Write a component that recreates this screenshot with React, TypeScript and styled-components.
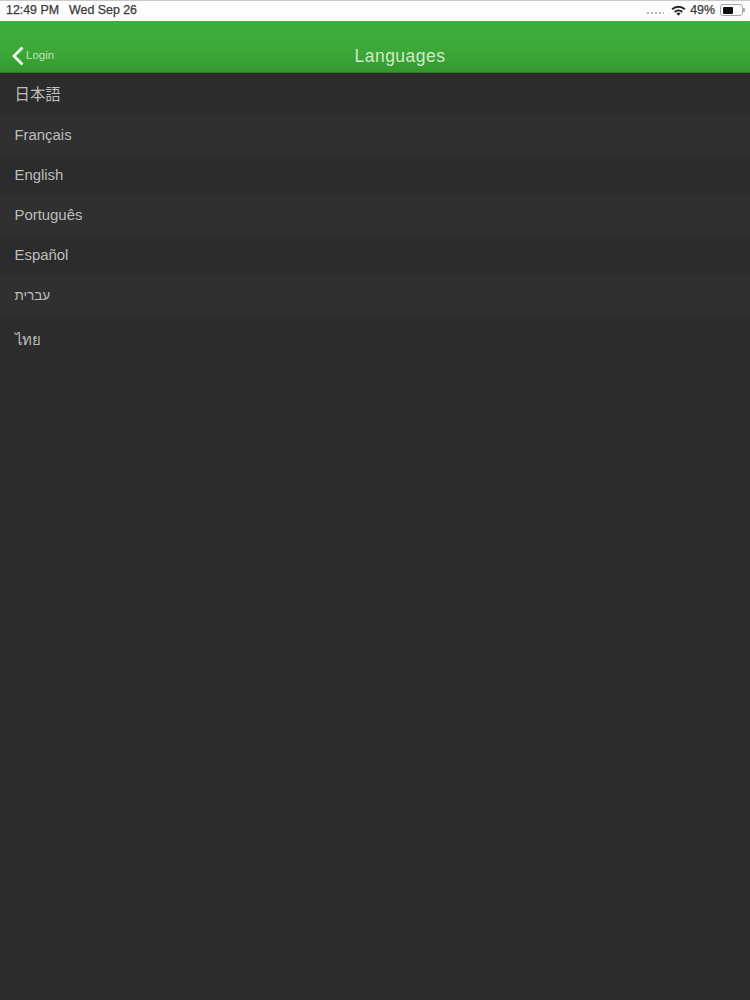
import React from "react";
import styled, { createGlobalStyle } from "styled-components";

const GlobalStyle = createGlobalStyle`
  html, body {
    margin: 0;
    padding: 0;
    background: #2c2c2c;
  }
  * {
    box-sizing: border-box;
  }
`;

const Screen = styled.div`
  width: 750px;
  height: 1000px;
  display: flex;
  flex-direction: column;
  overflow: hidden;
  background: #2c2c2c;
  font-family: "Liberation Sans", "Noto Sans CJK JP", "DejaVu Sans", sans-serif;
`;

const StatusBar = styled.div`
  height: 21px;
  flex: none;
  display: flex;
  align-items: center;
  justify-content: space-between;
  padding: 0 4px 2px 6px;
  background: #fcfdfc;
  border-top: 1px solid #c9c9c9;
  color: #3a3a3a;
  font-size: 12.4px;
  -webkit-text-stroke: 0.25px #3a3a3a;
`;

const StatusGroup = styled.div<{ $gap: number }>`
  display: flex;
  align-items: center;
  gap: ${(p) => p.$gap}px;
`;

const Dots = styled.div`
  width: 17px;
  height: 2px;
  margin-top: 5px;
  margin-right: 3px;
  background: repeating-linear-gradient(90deg, #b5b5b5 0 2px, transparent 2px 4px);
`;

const Battery = styled.div`
  position: relative;
  width: 23px;
  height: 12px;
  margin-left: 1px;
  margin-right: 3px;
  padding: 1.5px;
  border: 1px solid #a5a5a5;
  border-radius: 3px;
  &::before {
    content: "";
    display: block;
    width: 10px;
    height: 100%;
    border-radius: 1px;
    background: #111;
  }
  &::after {
    content: "";
    position: absolute;
    top: 3px;
    right: -3px;
    width: 2px;
    height: 4px;
    border-radius: 0 1px 1px 0;
    background: #aaa;
  }
`;

const NavBar = styled.div`
  position: relative;
  height: 52px;
  flex: none;
  display: flex;
  align-items: center;
  justify-content: center;
  padding: 20px 0 0 50px;
  background: linear-gradient(#3fae3b 0%, #3ca838 60%, #33992f 100%);
  border-bottom: 1px solid #2f7a2c;
`;

const BackButton = styled.div`
  position: absolute;
  left: 11px;
  top: 24px;
  display: flex;
  align-items: center;
  gap: 1px;
  color: #bfe3b8;
  font-size: 11.5px;
`;

const BackLabel = styled.span`
  margin-bottom: 2px;
`;

const Title = styled.div`
  color: #cdeac7;
  font-size: 17.5px;
  letter-spacing: 0.5px;
`;

const List = styled.div`
  display: flex;
  flex-direction: column;
`;

const Row = styled.div<{ $height: number; $alt?: boolean; $lift?: number }>`
  height: ${(p) => p.$height}px;
  display: flex;
  align-items: center;
  padding-left: 14.5px;
  padding-bottom: ${(p) => p.$lift ?? 0}px;
  background: ${(p) => (p.$alt ? "#303030" : "#2c2c2c")};
  color: #bdbdbd;
  font-size: 14.9px;
`;

const RowText = styled.span<{ $size?: number }>`
  font-size: ${(p) => p.$size ?? 14.9}px;
`;

const languages = [
  { name: "日本語", height: 42, size: 15.4, lift: 3 },
  { name: "Français", height: 40 },
  { name: "English", height: 40 },
  { name: "Português", height: 40 },
  { name: "Español", height: 40 },
  { name: "עברית", height: 41, size: 13.5 },
  { name: "ไทย", height: 47 },
];

const App: React.FC = () => {
  return (
    <Screen>
      <GlobalStyle />
      <StatusBar>
        <StatusGroup $gap={10}>
          <span>12:49 PM</span>
          <span>Wed Sep 26</span>
        </StatusGroup>
        <StatusGroup $gap={4}>
          <Dots />
          <svg width="15" height="11" viewBox="0 0 15 11">
            <path d="M0.5 3.6a10 10 0 0 1 14 0l-1.4 1.5a8 8 0 0 0-11.2 0z" fill="#222" />
            <path d="M3 6.2a6.5 6.5 0 0 1 9 0l-1.4 1.5a4.5 4.5 0 0 0-6.2 0z" fill="#222" />
            <path d="M5.4 8.6a3 3 0 0 1 4.2 0l-2.1 2.2z" fill="#222" />
          </svg>
          <span>49%</span>
          <Battery />
        </StatusGroup>
      </StatusBar>
      <NavBar>
        <BackButton>
          <svg width="14" height="22" viewBox="0 0 14 22">
            <path d="M11.5 2.5 3 11l8.5 8.5" fill="none" stroke="#f2f8f0" strokeWidth="2.8" />
          </svg>
          <BackLabel>Login</BackLabel>
        </BackButton>
        <Title>Languages</Title>
      </NavBar>
      <List>
        {languages.map((lang, i) => (
          <Row key={lang.name} $alt={i % 2 === 1} $height={lang.height} $lift={lang.lift}>
            <RowText $size={lang.size}>{lang.name}</RowText>
          </Row>
        ))}
      </List>
    </Screen>
  );
};

export default App;
